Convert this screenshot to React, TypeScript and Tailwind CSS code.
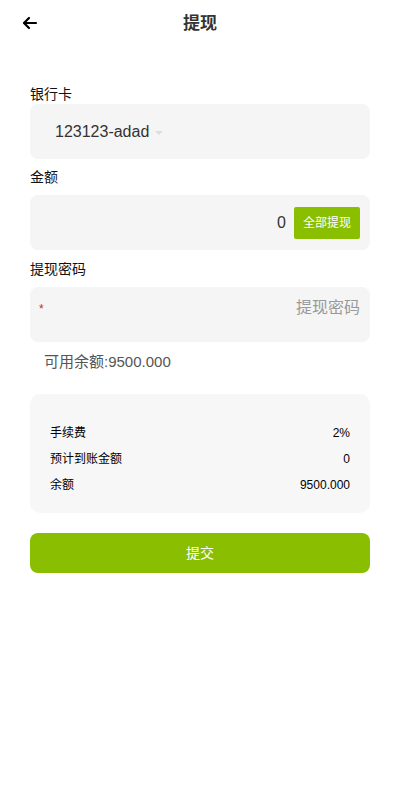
import React from "react";

const font = { fontFamily: '"Liberation Sans", "Noto Sans CJK SC", sans-serif' };

const InfoRow = ({ label, value }: { label: string; value: string }) => (
  <div className="flex h-[26px] items-center justify-between text-[12px] text-black">
    <span>{label}</span>
    <span>{value}</span>
  </div>
);

const App = () => {
  return (
    <div className="min-h-[800px] w-[400px] bg-white" style={font}>
      {/* Header */}
      <div className="relative flex h-[46px] items-center justify-center">
        <button className="absolute left-[22px] top-[15px] h-[16px] w-[16px]">
          <svg viewBox="0 0 16 16" width="16" height="16" fill="none" stroke="#000" strokeWidth="2.2" strokeLinecap="round" strokeLinejoin="round">
            <path d="M14 8H2.5" />
            <path d="M7 3L2 8l5 5" />
          </svg>
        </button>
        <h1 className="mt-[1px] text-[17px] font-bold text-[#333]">提现</h1>
      </div>

      <div className="px-[30px] pt-[38px]">
        {/* Bank card */}
        <div className="text-[14px] leading-[20px] text-[#111]">银行卡</div>
        <div className="flex h-[55px] items-center rounded-[8px] bg-[#f5f5f5] pl-[25px]">
          <span className="text-[16px] text-[#333]">123123-adad</span>
          <span className="ml-[6px] mt-[2px] h-0 w-0 border-x-[4px] border-t-[4px] border-x-transparent border-t-[#ddd]" />
        </div>

        {/* Amount */}
        <div className="mb-[8px] mt-[8px] text-[14px] leading-[20px] text-[#111]">金额</div>
        <div className="flex h-[55px] items-center justify-end rounded-[8px] bg-[#f5f5f5] pr-[10px]">
          <span className="mr-[8px] text-[16px] text-[#333]">0</span>
          <button className="flex h-[32px] w-[66px] items-center justify-center rounded-[2px] bg-[#8abf00] text-[12px] text-white">
            全部提现
          </button>
        </div>

        {/* Password */}
        <div className="mb-[8px] mt-[9px] text-[14px] leading-[20px] text-[#111]">提现密码</div>
        <div className="flex h-[55px] items-start justify-between rounded-[8px] bg-[#f5f5f5] pl-[9px] pr-[10px] pt-[9px]">
          <span className="mt-[5px] text-[12px] leading-[16px] text-[#c0284a]">*</span>
          <span className="text-[16px] leading-[24px] text-[#999]">提现密码</span>
        </div>

        <div className="mt-[10px] pl-[14px] text-[15px] leading-[20px] text-[#555]">可用余额:9500.000</div>

        {/* Info card */}
        <div className="mt-[22px] rounded-[10px] bg-[#f7f7f7] px-[20px] pb-[15px] pt-[26px]">
          <InfoRow label="手续费" value="2%" />
          <InfoRow label="预计到账金额" value="0" />
          <InfoRow label="余额" value="9500.000" />
        </div>

        <button className="mt-[20px] flex h-[40px] w-full items-center justify-center rounded-[8px] bg-[#89bf00] text-[14px] text-white">
          提交
        </button>
      </div>
    </div>
  );
};

export default App;
